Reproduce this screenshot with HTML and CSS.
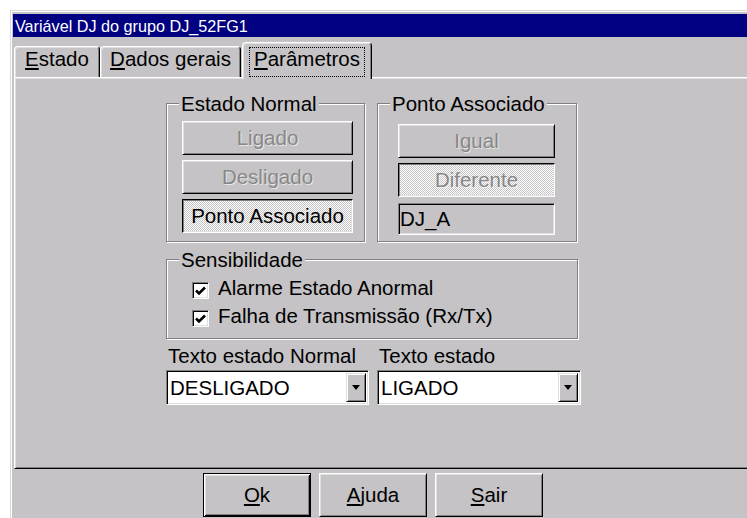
FILE: index.html
```html
<!DOCTYPE html>
<html lang="pt">
<head>
<meta charset="utf-8">
<title>Variável DJ do grupo DJ_52FG1</title>
<link rel="stylesheet" href="styles.css">
</head>
<body>
<div class="window">
  <div class="titlebar">Variável DJ do grupo DJ_52FG1</div>

  <div class="tabs">
    <div class="tab tab-estado"><u>E</u>stado</div>
    <div class="tab tab-dados"><u>D</u>ados gerais</div>
    <div class="tab tab-param active"><span class="focus"><u>P</u>arâmetros</span></div>
  </div>

  <div class="panel">
    <div class="groups">
      <div class="group group-normal">
        <div class="group-title">Estado Normal</div>
        <div class="stack stack-normal">
          <div class="btn disabled">Ligado</div>
          <div class="btn disabled">Desligado</div>
          <div class="btn pressed">Ponto Associado</div>
        </div>
      </div>
      <div class="group group-ponto">
        <div class="group-title">Ponto Associado</div>
        <div class="stack stack-ponto">
          <div class="btn disabled">Igual</div>
          <div class="btn pressed disabled">Diferente</div>
          <div class="field">DJ_A</div>
        </div>
      </div>
    </div>

    <div class="group group-sens">
      <div class="group-title">Sensibilidade</div>
      <div class="checks">
        <div class="check">
          <span class="box"><svg viewBox="0 0 15 15" width="15" height="15"><polyline points="3,7.5 6,10.5 12,4.5" fill="none" stroke="#000" stroke-width="2.6"/></svg></span>
          <span>Alarme Estado Anormal</span>
        </div>
        <div class="check">
          <span class="box"><svg viewBox="0 0 15 15" width="15" height="15"><polyline points="3,7.5 6,10.5 12,4.5" fill="none" stroke="#000" stroke-width="2.6"/></svg></span>
          <span>Falha de Transmissão (Rx/Tx)</span>
        </div>
      </div>
    </div>

    <div class="fields">
      <div class="field-label">Texto estado Normal</div>
      <div class="field-label">Texto estado</div>
      <div class="combo"><span class="combo-text">DESLIGADO</span><span class="drop"></span></div>
      <div class="combo"><span class="combo-text">LIGADO</span><span class="drop"></span></div>
    </div>
  </div>

  <div class="footer">
    <div class="btn push default"><span><u>O</u>k</span></div>
    <div class="btn push"><span><u>A</u>juda</span></div>
    <div class="btn push"><span><u>S</u>air</span></div>
  </div>
</div>
</body>
</html>
```

FILE: styles.css
```css
* { box-sizing: border-box; }

html, body {
  margin: 0;
  height: 100%;
  overflow: hidden;
  background: #fff;
}

body {
  font-family: "Liberation Sans", Arial, sans-serif;
  font-size: 20.5px;
  color: #000;
}

u { text-underline-offset: 2px; }

/* dialog frame; its right and bottom edges sit off-screen */
.window {
  margin: 10px 0 0 10px;
  width: 737px;
  height: 508px;
  overflow: hidden;
  background: #c5c3c5;
  border-top: 1px solid #d9d9d9;
  border-left: 1px solid #d9d9d9;
  box-shadow: inset 1px 1px 0 #fff;
  padding: 3px 0 0 2px;
}

.titlebar {
  height: 23px;
  background: #000080;
  color: #fff;
  font-size: 16.2px;
  line-height: 21px;
  padding: 2px 0 0 2px;
  white-space: nowrap;
}

/* tab strip */
.tabs {
  display: flex;
  align-items: flex-end;
  height: 40px;
  margin-left: 1px;
  position: relative;
  z-index: 1;
}

.tab {
  height: 31px;
  line-height: 22px;
  padding-top: 1px;
  text-align: center;
  white-space: nowrap;
  background: #c5c3c5;
  border-top: 1px solid #fff;
  border-left: 1px solid #fff;
  border-right: 1px solid #000;
  border-radius: 4px 4px 0 0;
  box-shadow: inset 1px 1px 0 #dfdfdf, inset -1px 0 0 #808080;
}

.tab-estado { width: 86px; }
.tab-dados { width: 141px; }
.tab-param { width: 130px; margin-left: 1px; }

.tab.active {
  height: 37px;
  margin-bottom: -2px;
  padding-top: 4px;
}

.focus {
  display: inline-block;
  border: 1px dotted #000;
  padding: 0 4px 6px;
  line-height: 22px;
}

/* page area */
.panel {
  height: 392px;
  margin-left: 1px;
  border-top: 1px solid #fff;
  border-left: 1px solid #fff;
  border-bottom: 1px solid #000;
  box-shadow: inset 1px 1px 0 #dfdfdf, inset 0 -1px 0 #808080;
  padding: 25px 0 0 151px;
}

.groups {
  display: flex;
  gap: 12px;
}

.group {
  border: 1px solid #808080;
  box-shadow: inset 1px 1px 0 #fff, 1px 1px 0 #fff;
}

.group-normal { width: 199px; height: 139px; }
.group-ponto { width: 200px; height: 139px; }
.group-sens { width: 412px; height: 80px; margin-top: 17px; }

.group-title {
  width: fit-content;
  margin: -11px 0 0 12px;
  padding: 0 2px;
  background: #c5c3c5;
  line-height: 22px;
  white-space: nowrap;
}

.stack {
  display: flex;
  flex-direction: column;
  gap: 5px;
}

.stack-normal { width: 171px; margin: 6px 0 0 15px; }
.stack-ponto { width: 157px; margin: 9px 0 0 20px; }

/* push buttons */
.btn {
  height: 34px;
  display: flex;
  align-items: center;
  justify-content: center;
  white-space: nowrap;
  background: #c5c3c5;
  border: 1px solid;
  border-color: #fff #000 #000 #fff;
  box-shadow: inset 1px 1px 0 #dfdfdf, inset -1px -1px 0 #808080;
}

.btn.disabled {
  color: #878787;
  text-shadow: 1px 1px 0 rgba(255, 255, 255, 0.6);
}

.btn.pressed {
  border-color: #000 #fff #fff #000;
  box-shadow: inset 1px 1px 0 #808080, inset -1px -1px 0 #dfdfdf;
  background: repeating-conic-gradient(#c5c3c5 0 25%, #fff 0 50%) 0 0 / 2px 2px;
}

.field {
  height: 32px;
  margin-top: 1px;
  line-height: 30px;
  padding-left: 1px;
  border: 1px solid;
  border-color: #808080 #fff #fff #808080;
  box-shadow: inset 1px 1px 0 #000, inset -1px -1px 0 #dfdfdf;
}

/* check boxes */
.checks { margin: 3px 0 0 25px; }

.check {
  display: flex;
  height: 28px;
  line-height: 28px;
  white-space: nowrap;
}

.box {
  width: 17px;
  height: 17px;
  margin: 8px 9px 0 0;
  background: #fff;
  border: 1px solid;
  border-color: #808080 #fff #fff #808080;
  box-shadow: inset 1px 1px 0 #000, inset -1px -1px 0 #dfdfdf;
}

.box svg { display: block; }

/* combo boxes */
.fields {
  display: grid;
  grid-template-columns: 203px 204px;
  column-gap: 8px;
  row-gap: 3px;
  margin-top: 6px;
}

.field-label {
  line-height: 22px;
  padding-left: 2px;
  white-space: nowrap;
}

.combo {
  height: 35px;
  display: flex;
  align-items: center;
  padding: 0 2px 0 3px;
  background: #fff;
  border: 1px solid;
  border-color: #808080 #fff #fff #808080;
  box-shadow: inset 1px 1px 0 #000, inset -1px -1px 0 #dfdfdf;
}

.combo-text { flex: 1; }

.drop {
  width: 20px;
  height: 29px;
  display: flex;
  align-items: center;
  justify-content: center;
  background: #c5c3c5;
  border: 1px solid;
  border-color: #dfdfdf #000 #000 #dfdfdf;
  box-shadow: inset 1px 1px 0 #fff, inset -1px -1px 0 #808080;
}

.drop::before {
  content: "";
  border-left: 4px solid transparent;
  border-right: 4px solid transparent;
  border-top: 5px solid #000;
}

/* dialog buttons */
.footer {
  display: flex;
  gap: 8px;
  padding: 4px 0 0 190px;
}

.btn.push {
  width: 108px;
  height: 44px;
}

.btn.default {
  border: 1px solid #000;
  box-shadow: inset 1px 1px 0 #fff, inset -1px -1px 0 #000, inset 2px 2px 0 #dfdfdf, inset -2px -2px 0 #808080;
}
```
